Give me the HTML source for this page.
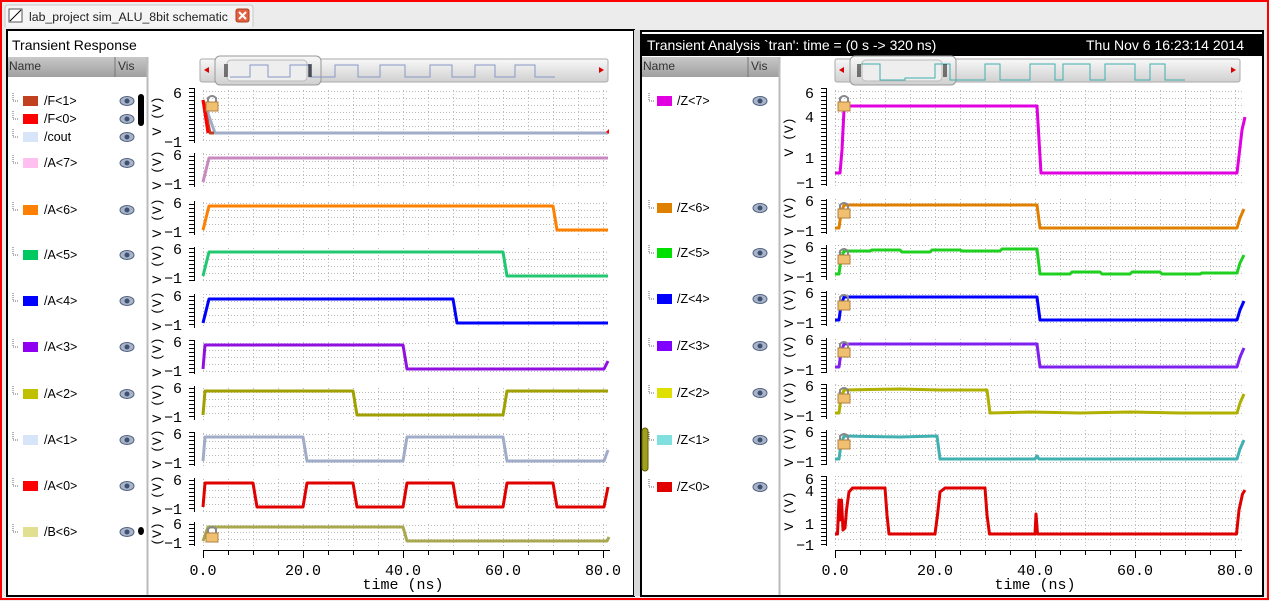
<!DOCTYPE html>
<html><head><meta charset="utf-8"><style>
html,body{margin:0;padding:0;width:1269px;height:601px;overflow:hidden;background:#ececec}
svg{display:block}
text{font-family:"Liberation Sans",sans-serif}
.m text,text.m{font-family:"Liberation Mono","DejaVu Sans Mono",monospace;font-size:15px}
.r text{font-size:13px}
.l text{font-size:12.5px}
.w{fill:none;stroke-width:3;stroke-linejoin:round}
</style></head><body>
<svg width="1269" height="601" viewBox="0 0 1269 601" xmlns="http://www.w3.org/2000/svg">
<defs>
<linearGradient id="hg" x1="0" y1="0" x2="0" y2="1"><stop offset="0" stop-color="#c8c8c8"/><stop offset="1" stop-color="#a0a0a0"/></linearGradient>
<linearGradient id="sg" x1="0" y1="0" x2="0" y2="1"><stop offset="0" stop-color="#f8f8f8"/><stop offset="1" stop-color="#d0d0d0"/></linearGradient>
<pattern id="gl" patternUnits="userSpaceOnUse" x="203" y="0" width="25" height="7"><path d="M0 0.5h1M3 0.5h1M6 0.5h1M9 0.5h1M12 0.5h1M15 0.5h1M18 0.5h1M21 0.5h1M0.5 3v1M0.5 6v1" stroke="#bbb"/></pattern>
<pattern id="gr" patternUnits="userSpaceOnUse" x="835" y="0" width="25" height="7"><path d="M0 0.5h1M3 0.5h1M6 0.5h1M9 0.5h1M12 0.5h1M15 0.5h1M18 0.5h1M21 0.5h1M0.5 3v1M0.5 6v1" stroke="#bbb"/></pattern>
<pattern id="tl" patternUnits="userSpaceOnUse" x="189" y="0" width="6" height="4"><path d="M0 0.5h5" stroke="#000"/></pattern>
<pattern id="tr" patternUnits="userSpaceOnUse" x="821" y="0" width="6" height="4"><path d="M0 0.5h5" stroke="#000"/></pattern>
<g id="eye"><ellipse cx="0" cy="0" rx="7" ry="4.5" fill="#a8b4c8" stroke="#506080"/><circle cx="0" cy="0" r="2.5" fill="#405070"/></g>
<g id="lock"><path d="M2 5V1Q6 -3 10 1V5" fill="none" stroke="#888" stroke-width="2"/><rect x="0" y="5" width="12" height="9" fill="#f0c070" stroke="#b08040"/></g>
<path id="tree" d="M-2 -8V0H3" fill="none" stroke="#666" stroke-dasharray="1 1"/>
</defs>
<rect x="0" y="0" width="1269" height="601" fill="#ececec"/>
<path d="M5 27V8Q5 5 8 5H250Q253 5 253 8V27" fill="#f4f4f4" stroke="#c8c8c8"/>
<rect x="9" y="9" width="13" height="13" fill="#fff" stroke="#555"/>
<line x1="10" y1="21" x2="21" y2="10" stroke="#000"/>
<text x="29" y="21" font-size="12.3" fill="#222">lab_project sim_ALU_8bit schematic</text>
<rect x="236" y="9" width="13" height="13" rx="2" fill="#e06040" stroke="#b04020"/>
<path d="M239 12L246 19M246 12L239 19" stroke="#fff" stroke-width="2"/>

<rect x="7" y="30" width="627" height="566" fill="#fff" stroke="#000" stroke-width="2"/>
<rect x="634" y="30" width="6" height="566" fill="#d8d8d8"/>
<rect x="641" y="31" width="622" height="565" fill="#fff" stroke="#000" stroke-width="2"/>
<text x="12" y="50" font-size="14">Transient Response</text>
<rect x="642" y="34" width="620" height="22" fill="#000"/>
<text x="647" y="50" font-size="14" fill="#fff">Transient Analysis `tran': time = (0 s -&gt; 320 ns)</text>
<text x="1244" y="50" font-size="14" fill="#fff" text-anchor="end">Thu Nov 6 16:23:14 2014</text>
<rect x="8" y="57" width="139" height="20" fill="url(#hg)"/>
<line x1="115" y1="57" x2="115" y2="77" stroke="#777"/>
<text x="9" y="70" font-size="12" fill="#333">Name</text><text x="118" y="70" font-size="12" fill="#333">Vis</text>
<line x1="147.5" y1="57" x2="147.5" y2="595" stroke="#bbb" stroke-width="2"/>
<rect x="642" y="57" width="137" height="20" fill="url(#hg)"/>
<line x1="748" y1="57" x2="748" y2="77" stroke="#777"/>
<text x="643" y="70" font-size="12" fill="#333">Name</text><text x="751" y="70" font-size="12" fill="#333">Vis</text>
<line x1="779.5" y1="57" x2="779.5" y2="595" stroke="#bbb" stroke-width="2"/>
<rect x="138" y="94" width="6" height="32" rx="3" fill="#000"/>
<ellipse cx="141" cy="531" rx="3" ry="4" fill="#000"/>
<rect x="642" y="428" width="6" height="43" rx="3" fill="#a0a020" stroke="#606000"/>

<g class="l">
<use href="#tree" x="15" y="101"/><rect x="23" y="96" width="15" height="10" fill="#c04020"/><text x="44" y="105">/F&lt;1&gt;</text>
<use href="#tree" x="15" y="119"/><rect x="23" y="114" width="15" height="10" fill="#ff0000"/><text x="44" y="123">/F&lt;0&gt;</text>
<use href="#tree" x="15" y="137"/><rect x="23" y="132" width="15" height="10" fill="#d8e4f8"/><text x="44" y="141">/cout</text>
<use href="#tree" x="15" y="163"/><rect x="23" y="158" width="15" height="10" fill="#ffc0f0"/><text x="44" y="167">/A&lt;7&gt;</text>
<use href="#tree" x="15" y="210"/><rect x="23" y="205" width="15" height="10" fill="#ff8000"/><text x="44" y="214">/A&lt;6&gt;</text>
<use href="#tree" x="15" y="255"/><rect x="23" y="250" width="15" height="10" fill="#00c860"/><text x="44" y="259">/A&lt;5&gt;</text>
<use href="#tree" x="15" y="301"/><rect x="23" y="296" width="15" height="10" fill="#0000ff"/><text x="44" y="305">/A&lt;4&gt;</text>
<use href="#tree" x="15" y="347"/><rect x="23" y="342" width="15" height="10" fill="#9000f0"/><text x="44" y="351">/A&lt;3&gt;</text>
<use href="#tree" x="15" y="394"/><rect x="23" y="389" width="15" height="10" fill="#c0c000"/><text x="44" y="398">/A&lt;2&gt;</text>
<use href="#tree" x="15" y="440"/><rect x="23" y="435" width="15" height="10" fill="#d8e4f8"/><text x="44" y="444">/A&lt;1&gt;</text>
<use href="#tree" x="15" y="486"/><rect x="23" y="481" width="15" height="10" fill="#ff0000"/><text x="44" y="490">/A&lt;0&gt;</text>
<use href="#tree" x="15" y="532"/><rect x="23" y="527" width="15" height="10" fill="#e0e090"/><text x="44" y="536">/B&lt;6&gt;</text>
</g>
<use href="#eye" x="127" y="101"/><use href="#eye" x="127" y="119"/><use href="#eye" x="127" y="137"/><use href="#eye" x="127" y="163"/>
<use href="#eye" x="127" y="210"/><use href="#eye" x="127" y="255"/><use href="#eye" x="127" y="301"/><use href="#eye" x="127" y="347"/>
<use href="#eye" x="127" y="394"/><use href="#eye" x="127" y="440"/><use href="#eye" x="127" y="486"/><use href="#eye" x="127" y="532"/>

<g class="l">
<use href="#tree" x="651" y="101"/><rect x="657" y="96" width="15" height="10" fill="#e000e0"/><text x="677" y="105">/Z&lt;7&gt;</text>
<use href="#tree" x="651" y="208"/><rect x="657" y="203" width="15" height="10" fill="#e08000"/><text x="677" y="212">/Z&lt;6&gt;</text>
<use href="#tree" x="651" y="253"/><rect x="657" y="248" width="15" height="10" fill="#00e000"/><text x="677" y="257">/Z&lt;5&gt;</text>
<use href="#tree" x="651" y="299"/><rect x="657" y="294" width="15" height="10" fill="#0000ff"/><text x="677" y="303">/Z&lt;4&gt;</text>
<use href="#tree" x="651" y="346"/><rect x="657" y="341" width="15" height="10" fill="#8000ff"/><text x="677" y="350">/Z&lt;3&gt;</text>
<use href="#tree" x="651" y="393"/><rect x="657" y="388" width="15" height="10" fill="#e0e000"/><text x="677" y="397">/Z&lt;2&gt;</text>
<use href="#tree" x="651" y="440"/><rect x="657" y="435" width="15" height="10" fill="#80e0e0"/><text x="677" y="444">/Z&lt;1&gt;</text>
<use href="#tree" x="651" y="487"/><rect x="657" y="482" width="15" height="10" fill="#e00000"/><text x="677" y="491">/Z&lt;0&gt;</text>
</g>
<use href="#eye" x="760" y="101"/><use href="#eye" x="760" y="208"/><use href="#eye" x="760" y="253"/><use href="#eye" x="760" y="299"/>
<use href="#eye" x="760" y="346"/><use href="#eye" x="760" y="393"/><use href="#eye" x="760" y="440"/><use href="#eye" x="760" y="487"/>

<rect x="200" y="59" width="408" height="23" rx="2" fill="url(#sg)" stroke="#aaa"/>
<rect x="215" y="56" width="106" height="29" rx="5" fill="url(#sg)" stroke="#999"/>
<rect x="227" y="60" width="80" height="21" rx="4" fill="#eee" stroke="#bbb"/>
<path d="M230 77H250V65H268V77H290V65H310V77H335V65H358V77H380V65H405V77H430V65H452V77H475V65H495V77H515V65H535V77H555" fill="none" stroke="#8898c8"/>
<path d="M225 64v13M227 64v13M309 64v13M311 64v13" stroke="#000"/>
<path d="M204 70l5 -3v6z" fill="#d00"/><path d="M604 70l-5 -3v6z" fill="#d00"/>

<rect x="835" y="59" width="405" height="23" rx="2" fill="url(#sg)" stroke="#aaa"/>
<rect x="850" y="56" width="106" height="29" rx="5" fill="url(#sg)" stroke="#999"/>
<rect x="862" y="60" width="80" height="21" rx="4" fill="#eee" stroke="#bbb"/>
<path d="M861 64H880V80H905V78H935V64H950V80H985V64H1000V80H1030V64H1055V80H1063V64H1090V80H1105V64H1135V80H1150V64H1165V80H1185" fill="none" stroke="#40b0b0"/>
<path d="M858 64v13M860 64v13M944 64v13M946 64v13" stroke="#000"/>
<path d="M839 70l5 -3v6z" fill="#d00"/><path d="M1236 70l-5 -3v6z" fill="#d00"/>

<g fill="url(#gl)">
<rect x="203" y="88" width="405" height="55"/>
<rect x="203" y="153" width="405" height="34"/>
<rect x="203" y="201" width="405" height="34"/>
<rect x="203" y="247" width="405" height="34"/>
<rect x="203" y="294" width="405" height="34"/>
<rect x="203" y="340" width="405" height="34"/>
<rect x="203" y="386" width="405" height="34"/>
<rect x="203" y="432" width="405" height="34"/>
<rect x="203" y="478" width="405" height="34"/>
<rect x="203" y="522" width="405" height="24"/>
</g>
<g fill="url(#tl)">
<rect x="189" y="88" width="5" height="55"/>
<rect x="189" y="153" width="5" height="34"/>
<rect x="189" y="201" width="5" height="34"/>
<rect x="189" y="247" width="5" height="34"/>
<rect x="189" y="294" width="5" height="34"/>
<rect x="189" y="340" width="5" height="34"/>
<rect x="189" y="386" width="5" height="34"/>
<rect x="189" y="432" width="5" height="34"/>
<rect x="189" y="478" width="5" height="34"/>
<rect x="189" y="522" width="5" height="24"/>
</g>
<path d="M194.5 88V143M194.5 153V187M194.5 201V235M194.5 247V281M194.5 294V328M194.5 340V374M194.5 386V420M194.5 432V466M194.5 478V512M194.5 522V546" stroke="#000"/>
<g class="m" text-anchor="end">
<text x="182" y="98">6</text><text x="182" y="147">−1</text>
<text x="182" y="160">6</text><text x="182" y="189">−1</text>
<text x="182" y="208">6</text><text x="182" y="237">−1</text>
<text x="182" y="254">6</text><text x="182" y="283">−1</text>
<text x="182" y="301">6</text><text x="182" y="330">−1</text>
<text x="182" y="347">6</text><text x="182" y="376">−1</text>
<text x="182" y="393">6</text><text x="182" y="422">−1</text>
<text x="182" y="439">6</text><text x="182" y="468">−1</text>
<text x="182" y="485">6</text><text x="182" y="514">−1</text>
<text x="182" y="529">6</text><text x="182" y="548">−1</text>
</g>
<g class="m r" text-anchor="middle">
<text transform="translate(161,116) rotate(-90)">V (V)</text>
<text transform="translate(161,170) rotate(-90)">V (V)</text>
<text transform="translate(161,218) rotate(-90)">V (V)</text>
<text transform="translate(161,264) rotate(-90)">V (V)</text>
<text transform="translate(161,311) rotate(-90)">V (V)</text>
<text transform="translate(161,357) rotate(-90)">V (V)</text>
<text transform="translate(161,403) rotate(-90)">V (V)</text>
<text transform="translate(161,449) rotate(-90)">V (V)</text>
<text transform="translate(161,495) rotate(-90)">V (V)</text>
<text transform="translate(161,534) rotate(-90)">(V)</text>
</g>
<path class="w" stroke="#a0acc8" d="M203 100L215 133L608 133"/>
<path class="w" stroke="#c04020" d="M203 100L210 133L214 133"/>
<path class="w" stroke="#ff0000" d="M203 100L208 133"/>
<path d="M606 132l3 -3v5z" fill="#f00"/>
<use href="#lock" x="206" y="97"/>
<path class="w" stroke="#c888c0" d="M203 182L209 158L608 158"/>
<path class="w" stroke="#ff8000" d="M203 230L209 206L553 206L557 230L608 230"/>
<path class="w" stroke="#20c870" d="M203 276L209 252L503 252L507 276L608 276"/>
<path class="w" stroke="#0000ff" d="M203 323L209 299L453 299L457 323L608 323"/>
<path class="w" stroke="#9010e0" d="M203 369L205 345L403 345L407 369L604 369L608 361"/>
<path class="w" stroke="#a0a000" d="M203 415L205 391L353 391L357 415L503 415L507 391L608 391"/>
<path class="w" stroke="#a0acc8" d="M203 461L205 437L303 437L307 461L403 461L407 437L503 437L507 461L604 461L608 450"/>
<path class="w" stroke="#e00000" d="M203 507L205 483L253 483L257 507L303 507L307 483L353 483L357 507L403 507L407 483L453 483L457 507L503 507L507 483L553 483L557 507L604 507L608 487"/>
<path class="w" stroke="#a8a850" d="M203 541L208 527L403 527L407 541L607 541L609 537"/>
<use href="#lock" x="206" y="528"/>
<path d="M203 550.5H610M203.5 550v8M228.5 550v5M253.5 550v5M278.5 550v5M303.5 550v8M328.5 550v5M353.5 550v5M378.5 550v5M403.5 550v8M428.5 550v5M453.5 550v5M478.5 550v5M503.5 550v8M528.5 550v5M553.5 550v5M578.5 550v5M603.5 550v8" stroke="#000"/>
<g class="m" text-anchor="middle">
<text x="203" y="575">0.0</text><text x="303" y="575">20.0</text><text x="403" y="575">40.0</text><text x="503" y="575">60.0</text><text x="603" y="575">80.0</text>
<text x="403" y="589">time (ns)</text>
</g>

<g fill="url(#gr)">
<rect x="835" y="88" width="407" height="98"/>
<rect x="835" y="199" width="407" height="35"/>
<rect x="835" y="245" width="407" height="35"/>
<rect x="835" y="291" width="407" height="35"/>
<rect x="835" y="338" width="407" height="35"/>
<rect x="835" y="384" width="407" height="35"/>
<rect x="835" y="430" width="407" height="35"/>
<rect x="835" y="476" width="407" height="70"/>
</g>
<g fill="url(#tr)">
<rect x="821" y="88" width="5" height="98"/>
<rect x="821" y="199" width="5" height="35"/>
<rect x="821" y="245" width="5" height="35"/>
<rect x="821" y="291" width="5" height="35"/>
<rect x="821" y="338" width="5" height="35"/>
<rect x="821" y="384" width="5" height="35"/>
<rect x="821" y="430" width="5" height="35"/>
<rect x="821" y="476" width="5" height="70"/>
</g>
<path d="M826.5 88V186M826.5 199V234M826.5 245V280M826.5 291V326M826.5 338V373M826.5 384V419M826.5 430V465M826.5 476V546" stroke="#000"/>
<g class="m" text-anchor="end">
<text x="814" y="98">6</text><text x="814" y="122">4</text><text x="814" y="163">1</text><text x="814" y="188">−1</text>
<text x="814" y="206">6</text><text x="814" y="236">−1</text>
<text x="814" y="252">6</text><text x="814" y="282">−1</text>
<text x="814" y="298">6</text><text x="814" y="328">−1</text>
<text x="814" y="345">6</text><text x="814" y="375">−1</text>
<text x="814" y="391">6</text><text x="814" y="421">−1</text>
<text x="814" y="437">6</text><text x="814" y="467">−1</text>
<text x="814" y="484">6</text><text x="814" y="496">4</text><text x="814" y="529">1</text><text x="814" y="550">−1</text>
</g>
<g class="m r" text-anchor="middle">
<text transform="translate(793,137) rotate(-90)">V (V)</text>
<text transform="translate(793,216) rotate(-90)">V (V)</text>
<text transform="translate(793,262) rotate(-90)">V (V)</text>
<text transform="translate(793,308) rotate(-90)">V (V)</text>
<text transform="translate(793,355) rotate(-90)">V (V)</text>
<text transform="translate(793,401) rotate(-90)">V (V)</text>
<text transform="translate(793,447) rotate(-90)">V (V)</text>
<text transform="translate(793,511) rotate(-90)">V (V)</text>
</g>
<path class="w" stroke="#e000e0" d="M835 173L840 173L842 150L844 110L846 106L1037 106L1041 173L1237 173L1242 130L1245 117"/>
<path class="w" stroke="#e08000" d="M835 228L839 228L841 213L844 205L1037 205L1040 228L1237 228L1240 218L1244 209"/>
<path class="w" stroke="#20d020" d="M835 274L839 274L841 259L844 251L870 251L872 250L900 250L902 252L930 252L932 250L960 250L962 251L1000 251L1002 249L1037 249L1040 274L1070 274L1072 272L1100 272L1102 274L1130 274L1132 272L1160 272L1162 274L1200 274L1202 273L1237 273L1240 263L1244 255"/>
<path class="w" stroke="#0000ff" d="M835 320L839 320L841 305L844 297L1037 297L1040 320L1237 320L1240 310L1244 301"/>
<path class="w" stroke="#8020f0" d="M835 367L839 367L841 352L844 344L1037 344L1040 367L1237 367L1240 357L1244 348"/>
<path class="w" stroke="#b0b000" d="M835 413L839 413L841 398L844 390L900 389L940 390L987 390L990 413L1030 412L1080 413L1130 412L1180 413L1237 413L1240 403L1244 394"/>
<path class="w" stroke="#40b0b0" d="M835 459L839 459L841 444L844 436L900 437L937 436L940 459L1035 459L1037 456L1039 459L1237 459L1240 449L1244 440"/>
<path class="w" stroke="#e00000" d="M835 534L837.5 534L839 500L840 520L841.5 500L843 530L845 528L846.5 510L849 492L852.5 488L885 488L887 515L889 534L935 534L937.5 515L940 492L945 488L985 488L987 515L989.5 534L1035 534L1036 514L1037.5 534L1236.5 534L1239 510L1242.5 494L1245 490"/>
<use href="#lock" x="838" y="97"/><use href="#lock" x="838" y="204"/><use href="#lock" x="838" y="250"/><use href="#lock" x="838" y="296"/>
<use href="#lock" x="838" y="343"/><use href="#lock" x="838" y="389"/><use href="#lock" x="838" y="435"/>
<path d="M835 550.5H1242M835.5 550v8M860.5 550v5M885.5 550v5M910.5 550v5M935.5 550v8M960.5 550v5M985.5 550v5M1010.5 550v5M1035.5 550v8M1060.5 550v5M1085.5 550v5M1110.5 550v5M1135.5 550v8M1160.5 550v5M1185.5 550v5M1210.5 550v5M1235.5 550v8" stroke="#000"/>
<g class="m" text-anchor="middle">
<text x="835" y="575">0.0</text><text x="935" y="575">20.0</text><text x="1035" y="575">40.0</text><text x="1135" y="575">60.0</text><text x="1235" y="575">80.0</text>
<text x="1035" y="589">time (ns)</text>
</g>

<rect x="1" y="1" width="1267" height="598" fill="none" stroke="#f00" stroke-width="2"/>
</svg>
</body></html>
